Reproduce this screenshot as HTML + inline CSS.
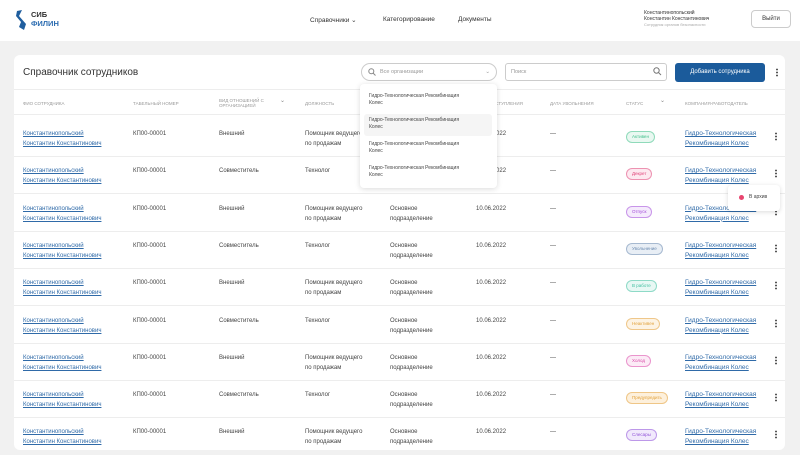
<!DOCTYPE html><html><head><meta charset="utf-8"><style>
*{margin:0;padding:0;box-sizing:border-box}
body{width:800px;height:455px;overflow:hidden;background:#f1f1f1;font-family:"Liberation Sans",sans-serif;position:relative;color:#333}
.a{position:absolute;white-space:nowrap}
.hdr{position:absolute;left:0;top:0;width:800px;height:41px;background:#fff}
.card{position:absolute;left:14px;top:55px;width:771px;height:395px;background:#fff;border-radius:6px}
.th{position:absolute;font-size:4.5px;color:#999;text-transform:uppercase;line-height:5px}
.line{position:absolute;left:14px;width:771px;height:1px;background:#ededed}
.t{position:absolute;font-size:6px;line-height:10px;color:#444;white-space:nowrap}
.lk{color:#2f6aa8;text-decoration:underline}
.st{position:absolute;font-size:4.5px;height:12px;line-height:10px;padding:0 5px;border-radius:6px;border:1px solid}
.dots{position:absolute;width:2px;height:9px;background:radial-gradient(circle,#555 0.9px,transparent 1px) 0 0/2px 3px}
</style></head><body>
<div class="hdr">
<svg class="a" style="left:16px;top:10px" width="12" height="20" viewBox="0 0 12 20"><path d="M1 1 L6 0 L3 6 L10 14 L8 20 L3 17 L5 12 L0 6Z" fill="#1f5e9e"/></svg>
<div class="a" style="left:31px;top:11px;font-size:7.5px;font-weight:bold;color:#333;line-height:8.5px">СИБ<br><span style="color:#2a6bb0">ФИЛИН</span></div>
<div class="a" style="left:310px;top:16px;font-size:6.5px;color:#333">Справочники ⌄</div>
<div class="a" style="left:383px;top:16px;font-size:6.5px;color:#333">Категорирование</div>
<div class="a" style="left:458px;top:16px;font-size:6.5px;color:#333">Документы</div>
<div class="a" style="left:644px;top:10px;font-size:5px;line-height:6px;color:#333">Константинопольский<br>Константин Константинович<br><span style="color:#aaa;font-size:4px">Сотрудник органов безопасности</span></div>
<div class="a" style="left:751px;top:10px;width:40px;height:18px;border:1px solid #ccc;border-radius:4px;font-size:6px;text-align:center;line-height:16px">Выйти</div>
</div>
<div class="card"></div>
<div class="a" style="left:23px;top:67px;font-size:10px;color:#333">Справочник сотрудников</div>
<div class="a" style="left:361px;top:63px;width:136px;height:18px;border:1px solid #ccc;border-radius:9px;font-size:5.5px;color:#999;line-height:16px;padding-left:18px">Все организации<span style="position:absolute;right:6px">⌄</span></div>
<svg class="a" style="left:368px;top:68px" width="8" height="8"><circle cx="3.3" cy="3.3" r="2.5" fill="none" stroke="#888" stroke-width="1"/><path d="M5 5L7.5 7.5" stroke="#888"/></svg>
<div class="a" style="left:505px;top:63px;width:162px;height:18px;border:1px solid #ccc;border-radius:3px;font-size:5.5px;color:#999;line-height:16px;padding-left:5px">Поиск</div>
<svg class="a" style="left:653px;top:67px" width="9" height="9"><circle cx="3.5" cy="3.5" r="2.7" fill="none" stroke="#777" stroke-width="1"/><path d="M5.5 5.5L8 8" stroke="#777"/></svg>
<div class="a" style="left:675px;top:63px;width:90px;height:19px;background:#1b5b9b;border-radius:3px;font-size:6px;color:#fff;text-align:center;line-height:19px">Добавить сотрудника</div>
<div class="dots" style="left:776px;top:68px"></div>
<div class="line" style="top:89px"></div>
<div class="th" style="left:23px;top:101px">ФИО сотрудника</div>
<div class="th" style="left:133px;top:101px">Табельный номер</div>
<div class="th" style="left:219px;top:98px">Вид отношений с<br>организацией</div>
<div class="a" style="left:280px;top:97px;font-size:6px;color:#888">⌄</div>
<div class="th" style="left:305px;top:101px">Должность</div>
<div class="th" style="left:476px;top:101px">Дата поступления</div>
<div class="th" style="left:550px;top:101px">Дата увольнения</div>
<div class="th" style="left:626px;top:101px">Статус</div>
<div class="a" style="left:660px;top:97px;font-size:6px;color:#888">⌄</div>
<div class="th" style="left:685px;top:101px">Компания-работодатель</div>
<div class="line" style="top:114px"></div>
<div id="rows"></div>
<script>
var st=[["Активен","#3fbf8a","#e9f8f1"],["Декрет","#e0457a","#fde9f0"],["Отпуск","#a24ad8","#f5ebfc"],["Увольнение","#6c8bb0","#e8eef5"],["В работе","#3fbfa0","#e8f8f4"],["Неактивен","#e2a23c","#fdf3e3"],["Холод","#d94aa8","#fcebf6"],["Предупредить","#e2a23c","#fdf0dc"],["Слесары","#9050d8","#f1e9fc"]];
var h="";
for(var i=0;i<9;i++){var y=129+i*37.3;var ext=i%2==0;
h+='<div class="t lk" style="left:23px;top:'+y+'px">Константинопольский<br>Константин Константинович</div>';
h+='<div class="t" style="left:133px;top:'+y+'px">КП00-00001</div>';
h+='<div class="t" style="left:219px;top:'+y+'px">'+(ext?'Внешний':'Совместитель')+'</div>';
h+='<div class="t" style="left:305px;top:'+y+'px">'+(ext?'Помощник ведущего<br>по продажам':'Технолог')+'</div>';
h+='<div class="t" style="left:390px;top:'+y+'px">Основное<br>подразделение</div>';
h+='<div class="t" style="left:476px;top:'+y+'px">10.06.2022</div>';
h+='<div class="t" style="left:550px;top:'+y+'px">—</div>';
h+='<div class="st" style="left:626px;top:'+(y+2)+'px;color:'+st[i][1]+';border-color:'+st[i][1]+'88;background:'+st[i][2]+'">'+st[i][0]+'</div>';
h+='<div class="t lk" style="left:685px;top:'+y+'px;font-size:6.5px">Гидро-Технологическая<br>Рекомбинация Колес</div>';
h+='<div class="dots" style="left:775px;top:'+(y+3)+'px"></div>';
if(i<8)h+='<div class="line" style="top:'+(y+27)+'px"></div>';}
document.getElementById('rows').innerHTML=h;
</script>
<div class="a" style="left:360px;top:84px;width:137px;height:104px;background:#fff;border-radius:4px;box-shadow:0 1px 6px rgba(0,0,0,.15)">
<div class="t" style="left:9px;top:9px;font-size:5px;line-height:7px">Гидро-Технологическая Рекомбинация<br>Колес</div>
<div class="a" style="left:4px;top:30px;width:128px;height:22px;background:#f5f5f5;border-radius:3px"></div>
<div class="t" style="left:9px;top:33px;font-size:5px;line-height:7px">Гидро-Технологическая Рекомбинация<br>Колес</div>
<div class="t" style="left:9px;top:57px;font-size:5px;line-height:7px">Гидро-Технологическая Рекомбинация<br>Колес</div>
<div class="t" style="left:9px;top:81px;font-size:5px;line-height:7px">Гидро-Технологическая Рекомбинация<br>Колес</div>
</div>
<div class="a" style="left:728px;top:185px;width:52px;height:26px;background:#fff;border-radius:4px;box-shadow:0 1px 5px rgba(0,0,0,.15)">
<div class="a" style="left:11px;top:10px;width:5px;height:5px;border-radius:50%;background:#e8456f"></div>
<div class="t" style="left:21px;top:7px;font-size:5px">В архив</div></div>
</body></html>
